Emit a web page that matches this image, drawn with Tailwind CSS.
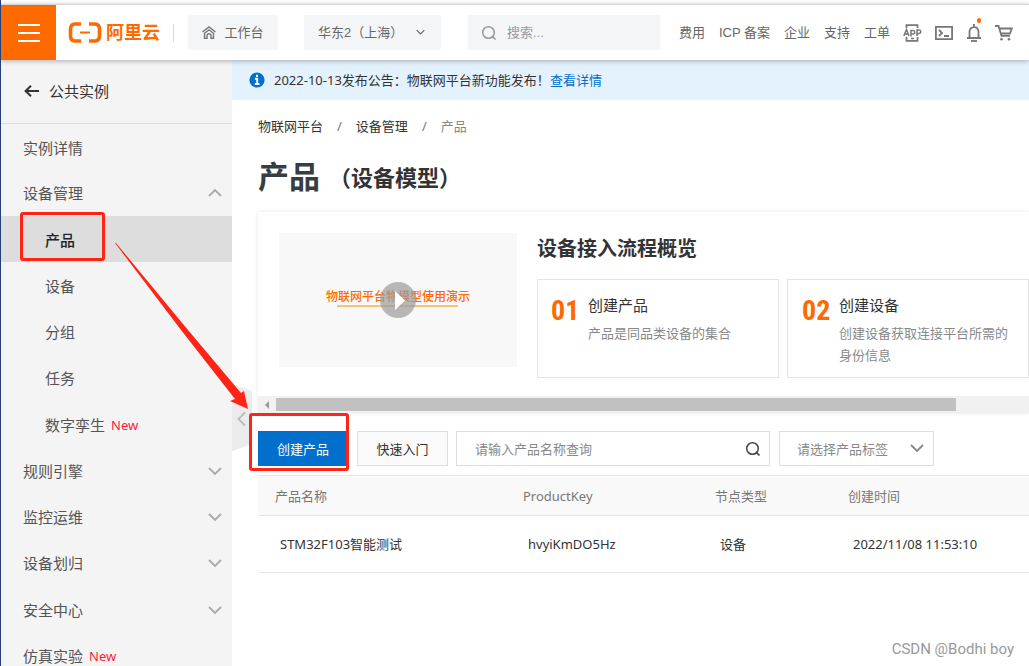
<!DOCTYPE html>
<html lang="zh-CN">
<head>
<meta charset="utf-8">
<meta name="viewport" content="width=device-width, initial-scale=1">
<title>物联网平台 - 产品</title>
<script src="https://cdn.jsdelivr.net/npm/@tailwindcss/browser@4"></script>
</head>
<body class="relative flex h-screen flex-col overflow-hidden border-l border-[#24407c] bg-white font-['Noto_Sans','Noto_Sans_CJK_SC',sans-serif] text-[13px] leading-5 text-[#333]">

<svg class="hidden" aria-hidden="true">
  <symbol id="down" viewBox="0 0 14 8"><path d="M1 1l6 6 6-6" fill="none" stroke="currentColor" stroke-width="1.8"/></symbol>
  <symbol id="search" viewBox="0 0 16 16"><circle cx="7.5" cy="7.5" r="5.8" fill="none" stroke="currentColor" stroke-width="1.5"/><path d="M11 11l3.5 3.5" fill="none" stroke="currentColor" stroke-width="1.7"/></symbol>
</svg>

<header class="relative z-10 mt-1 flex h-14 shrink-0 items-stretch border-t border-[#d4d4d4] bg-white font-['Liberation_Sans','Noto_Sans_CJK_SC',sans-serif] text-[#666] shadow-[0_1px_5px_rgba(0,0,0,0.3)]">
  <button type="button" aria-label="菜单" class="flex w-[55px] shrink-0 items-center justify-center bg-[#ff6a00]">
    <svg class="h-[18px] w-[22px]" viewBox="0 0 22 18"><path d="M0 1h22M0 9h22M0 17h22" stroke="#fff" stroke-width="2"/></svg>
  </button>
  <a href="#" class="ml-3 flex shrink-0 items-center gap-1 text-lg font-bold text-[#ff6a00]">
    <svg class="h-[21px] w-[34px]" viewBox="0 0 34 21" fill="none" stroke="#ff6a00"><path d="M13 2H7Q2.500 2.300 2.500 7V14Q2.500 18.700 7 19H13M21 2H27Q31.500 2.300 31.500 7V14Q31.500 18.700 27 19H21" stroke-width="3.600"/><path d="M12 10.500h10" stroke-width="2"/></svg>
    <span>阿里云</span>
  </a>
  <span class="ml-[13px] h-[18px] w-px shrink-0 self-center bg-[#d8d8d8]"></span>
  <a href="#" class="ml-[14px] flex h-[35px] w-[90px] shrink-0 items-center justify-center gap-2 self-center rounded-xs bg-[#f4f5f7]">
    <svg class="h-[13px] w-[14px]" viewBox="0 0 14 13" fill="none" stroke="#777" stroke-width="1.400"><path d="M.5 6L7 1l6.500 5M2.500 7v5.300H5V9.500Q5 7.700 7 7.700T9 9.500v2.800h2.500V7M2.500 7.300L7 3.800l4.500 3.500"/></svg>
    <span>工作台</span>
  </a>
  <div class="relative ml-[26px] h-[35px] w-[137px] shrink-0 self-center">
    <select aria-label="地域" class="h-full w-full appearance-none rounded-xs bg-[#f4f5f7] pl-[14px]"><option>华东2（上海）</option></select>
    <svg class="pointer-events-none absolute top-[14px] right-4 h-[6px] w-[9px]"><use href="#down"/></svg>
  </div>
  <label class="ml-[27px] flex h-[35px] w-48 min-w-0 items-center gap-[10px] self-center bg-[#f4f5f7] pl-[13px]">
    <svg class="h-4 w-4 shrink-0 text-[#999]"><use href="#search"/></svg>
    <input type="search" aria-label="搜索" placeholder="搜索..." class="w-full min-w-0 bg-transparent outline-none placeholder:text-[#999]">
  </label>
  <nav class="ml-auto flex shrink-0 items-center gap-[13px] pr-4 whitespace-nowrap" aria-label="顶部导航">
    <div class="flex gap-[14px]"><a href="#">费用</a><a href="#">ICP 备案</a><a href="#">企业</a><a href="#">支持</a><a href="#">工单</a></div>
    <a href="#" aria-label="APP">
      <svg class="h-[18px] w-[19px]" viewBox="0 0 19 18" fill="none" stroke="#777" stroke-width="1.700"><path d="M3.500 4V1.200h11V4M3.500 13v3.800h11V13M8 14.500h3"/><path d="M.8 12L3.500 5.500 6 12M1.500 10h4M8 12.500v-6h2.200q1.600.1 1.600 1.700T10.200 10H8M14 12V6h2.200q1.600.1 1.600 1.700T16.200 9.500H14" stroke-width="1.500"/></svg>
    </a>
    <a href="#" aria-label="命令行">
      <svg class="h-[14px] w-[18px]" viewBox="0 0 18 14" fill="none" stroke="#777" stroke-width="1.800"><path d="M.9.9h16.200v12.200H.9zM4 4l3 3-3 3M9 10h5"/></svg>
    </a>
    <a href="#" aria-label="消息" class="relative mx-px">
      <svg class="h-[18px] w-[14px]" viewBox="0 0 14 18" fill="none" stroke="#777" stroke-width="1.800"><path d="M2.500 13.500V8Q2.700 3.300 7 3.200T11.500 8v5.500M0 14h14M7 0v3"/><path d="M4 17h6"/></svg>
      <span class="absolute -top-[6px] right-0 h-[5px] w-1 rounded-full bg-[#ff6a00]"></span>
    </a>
    <a href="#" aria-label="购物车">
      <svg class="h-4 w-[18px]" viewBox="0 0 18 16" fill="none" stroke="#777" stroke-width="1.800"><path d="M0 1h3.500l3 9.800H15M4.300 3.500h12.500l-1.800 5H6"/><circle cx="6.500" cy="14.300" r="1.300" fill="#777" stroke="none"/><circle cx="14" cy="14.300" r="1.300" fill="#777" stroke="none"/></svg>
    </a>
  </nav>
</header>

<div class="flex min-h-0 flex-1">
  <aside class="w-[231px] shrink-0 overflow-hidden bg-[#f4f4f4] text-[15px] text-[#555]">
    <a href="#" class="flex h-16 items-center gap-[10px] border-b border-[#dcdcdc] pb-[2px] pl-[23px] text-[#333]">
      <svg class="h-3 w-[15px]" viewBox="0 0 15 12" fill="none" stroke="#333" stroke-width="2"><path d="M1.500 6H15M7 .8L1.600 6 7 11.200"/></svg>
      <span>公共实例</span>
    </a>
    <nav aria-label="产品导航">
      <a href="#" class="flex h-[46px] items-center pt-[2px] pl-[22px]">实例详情</a>
      <button type="button" aria-expanded="true" class="flex h-[46px] w-full items-center justify-between pr-[10px] pl-[22px]">设备管理<svg class="h-2 w-[14px] rotate-180 text-[#aaa]"><use href="#down"/></svg></button>
      <div class="mb-px">
        <a href="#" aria-current="page" class="flex h-[46px] items-center bg-[#ddd] pt-[2px] pl-11 font-medium text-[#222]">产品</a>
        <a href="#" class="flex h-[46px] items-center pt-[2px] pl-11">设备</a>
        <a href="#" class="flex h-[46px] items-center pt-[2px] pl-11">分组</a>
        <a href="#" class="flex h-[46px] items-center pt-[2px] pl-11">任务</a>
        <a href="#" class="flex h-[46px] items-center gap-[6px] pt-1 pl-11">数字孪生<span class="text-[13px] text-[#ff1a3c]">New</span></a>
      </div>
      <button type="button" class="flex h-[46px] w-full items-center justify-between pt-[2px] pr-[10px] pl-[22px]">规则引擎<svg class="h-2 w-[14px] text-[#aaa]"><use href="#down"/></svg></button>
      <button type="button" class="flex h-[46px] w-full items-center justify-between pt-[2px] pr-[10px] pl-[22px]">监控运维<svg class="h-2 w-[14px] text-[#aaa]"><use href="#down"/></svg></button>
      <button type="button" class="flex h-[46px] w-full items-center justify-between pt-[2px] pr-[10px] pl-[22px]">设备划归<svg class="h-2 w-[14px] text-[#aaa]"><use href="#down"/></svg></button>
      <button type="button" class="flex h-[46px] w-full items-center justify-between pt-1 pr-[10px] pl-[22px]">安全中心<svg class="h-2 w-[14px] text-[#aaa]"><use href="#down"/></svg></button>
      <a href="#" class="flex h-[46px] items-center gap-[6px] pt-1 pl-[22px]">仿真实验<span class="text-[13px] text-[#ff1a3c]">New</span></a>
    </nav>
  </aside>

  <main class="relative min-w-0 flex-1 overflow-hidden">
    <div class="flex h-10 items-center bg-[#e4f2fe] pl-[17px]">
      <svg class="mr-[9px] h-4 w-4" viewBox="0 0 16 16"><circle cx="8" cy="8" r="7.600" fill="#0070cc"/><path d="M8 2.800v2.300M6 6.800h2.200v5M5.800 12h4.600" fill="none" stroke="#fff" stroke-width="1.900"/></svg>
      <p>2022-10-13发布公告：物联网平台新功能发布！<a href="#" class="text-[#0070cc]">查看详情</a></p>
    </div>

    <div class="pl-[26px]">
      <nav aria-label="面包屑" class="flex gap-[14px] pt-4">
        <a href="#">物联网平台</a><span class="text-[#777]">/</span><a href="#">设备管理</a><span class="text-[#777]">/</span><span class="text-[#888]">产品</span>
      </nav>
      <h1 class="mt-5 flex h-10 items-center gap-[9px] text-[31px] leading-10 font-bold text-[#373d41]">产品<span class="pt-[2px] text-[22px] text-[#333]">（设备模型）</span></h1>

      <section class="mt-4 overflow-hidden shadow-[0_0_4px_rgba(0,0,0,0.1)]">
        <div class="flex pt-[21px] pb-[18px] pl-[21px]">
          <div class="relative flex h-[134px] w-[238px] shrink-0 items-center justify-center bg-[#f8f8f8]">
            <p class="-mt-[6px] text-[12px] leading-6 font-medium text-[#ff6a00]">物联网平台物模型使用演示</p>
            <span class="absolute top-[72px] left-[58px] h-[2px] w-[121px] bg-[#f4c474]"></span>
            <button type="button" aria-label="播放" class="absolute top-[49px] left-[101px] flex h-9 w-9 items-center justify-center rounded-full bg-[#9b9b9b]/70">
              <svg class="ml-1 h-[19px] w-[10px]" viewBox="0 0 10 19"><path d="M0 0l10 9.500L0 19z" fill="#fff"/></svg>
            </button>
          </div>
          <div class="ml-5 shrink-0">
            <h2 class="text-xl leading-8 font-bold">设备接入流程概览</h2>
            <div class="mt-[14px] flex gap-2">
              <article class="flex h-[99px] w-[242px] gap-3 border border-[#e5e5e5] pt-[14px] pl-[13px]">
                <strong class="w-[25px] font-['Liberation_Sans_Narrow','Roboto_Condensed','DejaVu_Sans_Condensed',sans-serif] text-[28px] leading-[34px] text-[#ff6a00]">01</strong>
                <div><h3 class="text-[15px] leading-[22px]">创建产品</h3><p class="mt-[6px] w-[174px] leading-[22px] text-[#888]">产品是同品类设备的集合</p></div>
              </article>
              <article class="flex h-[99px] w-[242px] gap-3 border border-[#e5e5e5] pt-[14px] pl-[14px]">
                <strong class="w-[25px] font-['Liberation_Sans_Narrow','Roboto_Condensed','DejaVu_Sans_Condensed',sans-serif] text-[28px] leading-[34px] text-[#ff6a00]">02</strong>
                <div><h3 class="text-[15px] leading-[22px]">创建设备</h3><p class="mt-[6px] w-[174px] leading-[22px] text-[#888]">创建设备获取连接平台所需的身份信息</p></div>
              </article>
            </div>
          </div>
        </div>
        <div class="flex h-[17px] items-center bg-[#f1f1f1] pl-[7px]">
          <svg class="mr-[7px] h-2 w-1" viewBox="0 0 4 8"><path d="M4 0v8L0 4z" fill="#999"/></svg>
          <span class="h-[13px] w-[89%] bg-[#c1c1c1]"></span>
        </div>
      </section>

      <div class="mt-[18px] flex h-[35px] items-stretch">
        <button type="button" class="w-[90px] bg-[#0070cc] text-white">创建产品</button>
        <button type="button" class="ml-[9px] w-[91px] border border-[#dedede] bg-[#fafafa]">快速入门</button>
        <label class="ml-2 flex w-[314px] items-center border border-[#dedede] pr-2 pl-[18px]">
          <input type="search" aria-label="产品名称" placeholder="请输入产品名称查询" class="min-w-0 flex-1 outline-none placeholder:text-[#888]">
          <svg class="h-4 w-4 text-[#444]"><use href="#search"/></svg>
        </label>
        <div class="relative ml-[9px] w-[155px]">
          <select aria-label="产品标签" class="h-full w-full appearance-none border border-[#dedede] pl-[17px] text-[#888]"><option>请选择产品标签</option></select>
          <svg class="pointer-events-none absolute top-[13px] right-[10px] h-2 w-[14px] text-[#888]"><use href="#down"/></svg>
        </div>
      </div>

      <table class="mt-[9px] w-full table-fixed text-left">
        <thead>
          <tr class="h-10 border-y border-[#e8e8e8] bg-[#f9f9f9] text-[#777]">
            <th class="w-[248px] pl-[17px] font-normal">产品名称</th><th class="w-48 pl-[17px] font-normal">ProductKey</th><th class="w-[133px] pl-[17px] font-normal">节点类型</th><th class="pl-[17px] font-normal">创建时间</th>
          </tr>
        </thead>
        <tbody>
          <tr class="h-[57px] border-b border-[#e8e8e8]">
            <td class="pl-[22px]">STM32F103智能测试</td><td class="pl-[22px]">hvyiKmDO5Hz</td><td class="pl-[22px]">设备</td><td class="pl-[22px]">2022/11/08 11:53:10</td>
          </tr>
        </tbody>
      </table>
    </div>

    <button type="button" aria-label="收起导航" class="absolute top-[324px] left-0">
      <svg class="h-[67px] w-5" viewBox="0 0 20 67"><path d="M0 0l20 7v53L0 67z" fill="#ebebeb"/><path d="M13 28.500l-6.500 6.500 6.500 6.500" fill="none" stroke="#bbb" stroke-width="1.800"/></svg>
    </button>
  </main>
</div>

<!-- Tutorial annotations drawn over the console -->
<div class="pointer-events-none absolute top-[212px] left-[19px] z-20 h-[49px] w-[85px] rounded-[3px] border-3 border-[#ff2416]"></div>
<div class="pointer-events-none absolute top-[413px] left-[248px] z-20 h-[58px] w-[100px] rounded-[3px] border-3 border-[#ff2416]"></div>
<svg class="pointer-events-none absolute top-[242px] left-[113px] z-20 h-[170px] w-[136px]" viewBox="0 0 136 170"><path d="M1 1h1L74 88 127 151l3-2 4 18-18-8 5-2L67 88z" fill="#ff2416"/></svg>
<p class="pointer-events-none absolute right-[15px] bottom-[7px] z-20 font-['Roboto',sans-serif] text-[15px] text-[#999]">CSDN @Bodhi boy</p>
</body>
</html>
